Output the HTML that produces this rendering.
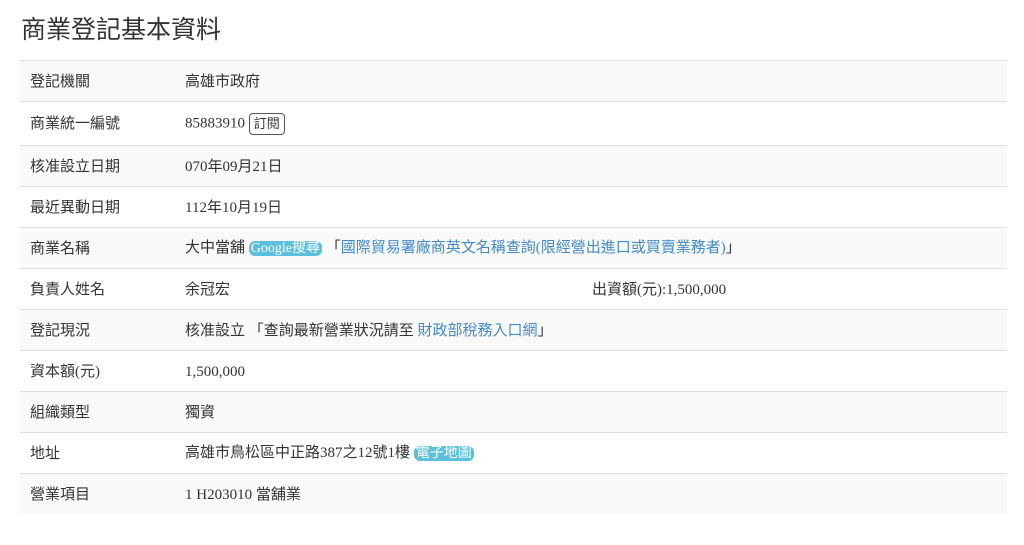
<!DOCTYPE html>
<html><head><meta charset="utf-8"><style>
body{margin:0;background:#fff;font-family:"Liberation Serif","Noto Sans CJK TC",serif;color:#333;}
h1{position:absolute;left:21px;top:12px;margin:0;font-weight:normal;font-size:25px;line-height:36px;font-family:"Liberation Sans","Noto Sans CJK TC",sans-serif;color:#333}
table{position:absolute;left:20px;top:60px;width:987px;border-collapse:collapse;font-size:15px}
td{border-top:1px solid #ddd;height:39px;padding:1px 10px 0;vertical-align:middle;line-height:20px}
tr:nth-child(odd) td{background:#f9f9f9}
td.l{width:135px}
a{color:#428bca;text-decoration:none}
.btn{display:inline-block;border:1px solid #555;border-radius:4px;padding:0 4px;font-size:13px;line-height:20px;vertical-align:middle}
.badge{background:#5bc0de;color:#fff;border-radius:6px;padding:0 2px;font-size:14px}
</style></head><body>
<h1>商業登記基本資料</h1>
<table>
<tr><td class="l">登記機關</td><td>高雄市政府</td></tr>
<tr><td class="l" style="height:42px">商業統一編號</td><td>85883910 <span class="btn">訂閱</span></td></tr>
<tr><td class="l">核准設立日期</td><td>070年09月21日</td></tr>
<tr><td class="l">最近異動日期</td><td>112年10月19日</td></tr>
<tr><td class="l">商業名稱</td><td>大中當舖 <span class="badge">Google搜尋</span> 「<a>國際貿易署廠商英文名稱查詢(限經營出進口或買賣業務者)</a>」</td></tr>
<tr><td class="l">負責人姓名</td><td>余冠宏<span style="position:absolute;left:572px">出資額(元):1,500,000</span></td></tr>
<tr><td class="l">登記現況</td><td>核准設立 「查詢最新營業狀況請至 <a>財政部稅務入口網</a>」</td></tr>
<tr><td class="l">資本額(元)</td><td>1,500,000</td></tr>
<tr><td class="l">組織類型</td><td>獨資</td></tr>
<tr><td class="l">地址</td><td>高雄市鳥松區中正路387之12號1樓 <span class="badge">電子地圖</span></td></tr>
<tr><td class="l">營業項目</td><td>1 H203010 當舖業</td></tr>
</table>
</body></html>
